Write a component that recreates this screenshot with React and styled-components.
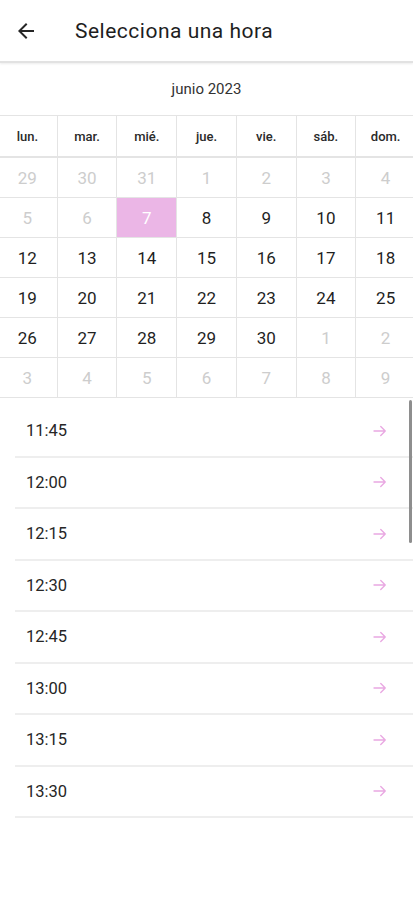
import React from "react";
import styled, { createGlobalStyle } from "styled-components";

const GlobalStyle = createGlobalStyle`
  html, body {
    margin: 0;
    padding: 0;
    background: #ffffff;
    font-family: Roboto, "Noto Sans", Arial, sans-serif;
    overflow-x: hidden;
  }
`;

const Page = styled.div`
  width: 413px;
  min-height: 900px;
  background: #fff;
  overflow: hidden;
`;

const TopBar = styled.header`
  height: 61px;
  display: flex;
  align-items: center;
  padding-left: 14px;
  border-bottom: 2px solid #e2e2e2;
  box-shadow: 0 1px 2px rgba(0, 0, 0, 0.08);
`;

const BackButton = styled.button`
  width: 24px;
  height: 24px;
  padding: 0;
  border: 0;
  background: none;
  display: flex;
  align-items: center;
  justify-content: center;
  margin-right: 37px;
`;

const Title = styled.h1`
  margin: 0;
  font-size: 21px;
  font-weight: 400;
  color: #1e1e1e;
  letter-spacing: 0.5px;
`;

const MonthLabel = styled.div`
  height: 52px;
  display: flex;
  align-items: center;
  justify-content: center;
  font-size: 15px;
  color: #333;
`;

const Grid = styled.div`
  width: 418px;
  margin-left: -2px;
  display: grid;
  grid-template-columns: repeat(7, 1fr);
  border-top: 1px solid #e4e4e4;
`;

const HeadCell = styled.div`
  height: 42px;
  box-sizing: border-box;
  display: flex;
  align-items: center;
  justify-content: center;
  font-size: 13px;
  font-weight: 500;
  color: #2a2a2a;
  border-right: 1px solid #e4e4e4;
  border-bottom: 2px solid #e4e4e4;
`;

const DayCell = styled.div`
  height: 40px;
  box-sizing: border-box;
  display: flex;
  align-items: center;
  justify-content: center;
  font-size: 17px;
  color: ${(p) => (p.selected ? "#ffffff" : p.muted ? "#cdcdcd" : "#1f1f1f")};
  background: ${(p) => (p.selected ? "#ebb6e6" : "transparent")};
  border-right: 1px solid #e4e4e4;
  border-bottom: 1px solid #e4e4e4;
`;

const SlotList = styled.div`
  position: relative;
  margin-top: 8px;
`;

const Slot = styled.div`
  height: 51.5px;
  box-sizing: border-box;
  margin-left: 15px;
  padding: 0 24px 0 11px;
  display: flex;
  align-items: center;
  justify-content: space-between;
  border-bottom: 2px solid #eeeeee;
  font-size: 16.5px;
  color: #262626;
`;

const ScrollThumb = styled.div`
  position: absolute;
  right: 1px;
  top: -6px;
  width: 3px;
  height: 143px;
  border-radius: 2px;
  background: #8e8e8e;
`;

const weekdays = ["lun.", "mar.", "mié.", "jue.", "vie.", "sáb.", "dom."];

const days = [
  [29, 30, 31, 1, 2, 3, 4].map((d) => ({ d, muted: true })),
  [
    { d: 5, muted: true },
    { d: 6, muted: true },
    { d: 7, selected: true },
    { d: 8 },
    { d: 9 },
    { d: 10 },
    { d: 11 },
  ],
  [12, 13, 14, 15, 16, 17, 18].map((d) => ({ d })),
  [19, 20, 21, 22, 23, 24, 25].map((d) => ({ d })),
  [
    { d: 26 },
    { d: 27 },
    { d: 28 },
    { d: 29 },
    { d: 30 },
    { d: 1, muted: true },
    { d: 2, muted: true },
  ],
  [3, 4, 5, 6, 7, 8, 9].map((d) => ({ d, muted: true })),
].flat();

const slots = ["11:45", "12:00", "12:15", "12:30", "12:45", "13:00", "13:15", "13:30"];

const ArrowBack = () => (
  <svg width="24" height="24" viewBox="0 0 24 24">
    <path fill="#262626" d="M20 11H7.83l5.59-5.59L12 4l-8 8 8 8 1.41-1.41L7.83 13H20v-2z" />
  </svg>
);

const ArrowNext = () => (
  <svg width="18" height="18" viewBox="0 0 24 24">
    <path
      fill="none"
      stroke="#e9a8e2"
      strokeWidth="1.8"
      strokeLinecap="round"
      strokeLinejoin="round"
      d="M4 12h15M13 6l6 6-6 6"
    />
  </svg>
);

export default function App() {
  return (
    <Page>
      <GlobalStyle />
      <TopBar>
        <BackButton aria-label="Volver">
          <ArrowBack />
        </BackButton>
        <Title>Selecciona una hora</Title>
      </TopBar>

      <MonthLabel>junio 2023</MonthLabel>

      <Grid>
        {weekdays.map((w) => (
          <HeadCell key={w}>{w}</HeadCell>
        ))}
        {days.map((c, i) => (
          <DayCell key={i} muted={c.muted} selected={c.selected}>
            {c.d}
          </DayCell>
        ))}
      </Grid>

      <SlotList>
        <ScrollThumb />
        {slots.map((s) => (
          <Slot key={s}>
            <span>{s}</span>
            <ArrowNext />
          </Slot>
        ))}
      </SlotList>
    </Page>
  );
}
